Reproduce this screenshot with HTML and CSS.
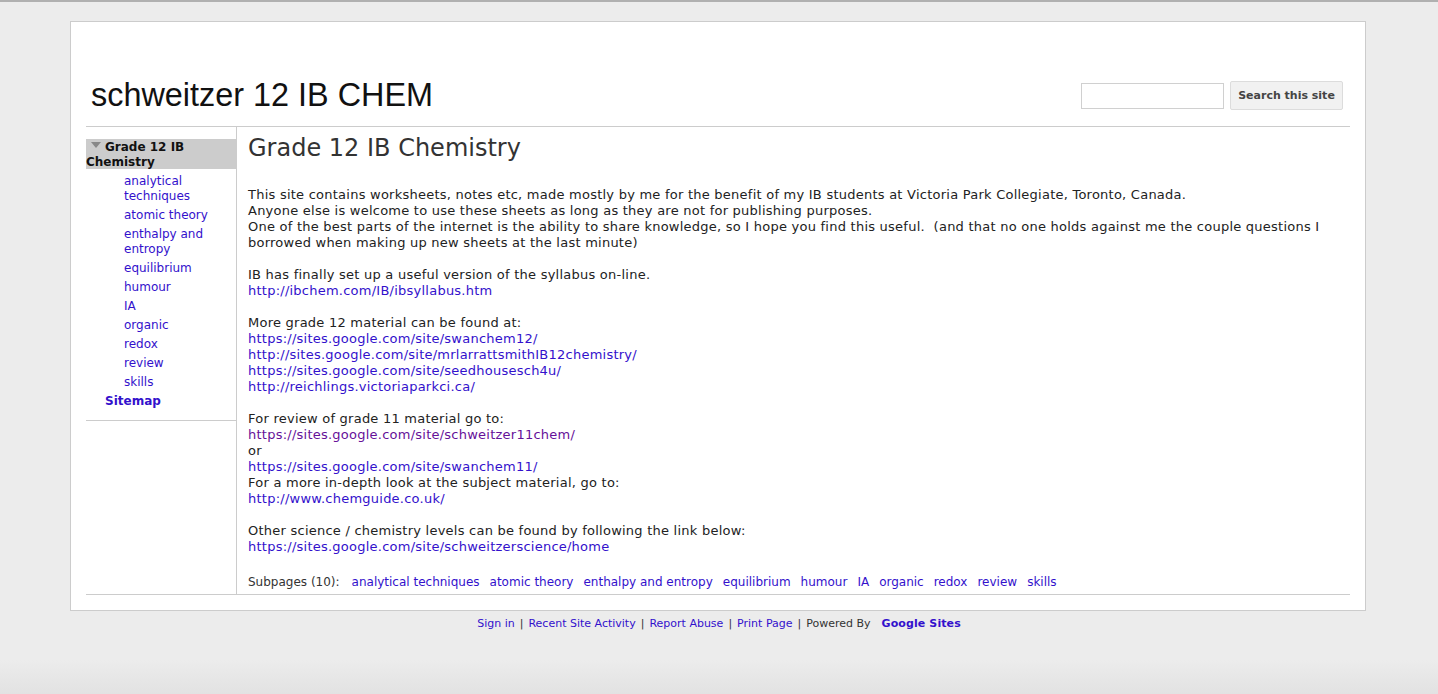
FILE: index.html
```html
<!DOCTYPE html>
<html>
<head>
<meta charset="utf-8">
<title>schweitzer 12 IB CHEM</title>
<link rel="stylesheet" href="styles.css">
</head>
<body>
<div class="page">
  <header class="header">
    <h1 class="site-title">schweitzer 12 IB CHEM</h1>
    <form class="search">
      <input class="search-input" type="text">
      <button class="search-btn" type="button">Search this site</button>
    </form>
  </header>
  <div class="main">
    <nav class="sidebar">
      <div class="nav-box">
        <div class="nav-current"><span class="tri"></span>Grade 12 IB Chemistry</div>
        <ul class="nav-list">
          <li><a href="#">analytical techniques</a></li>
          <li><a href="#">atomic theory</a></li>
          <li><a href="#">enthalpy and entropy</a></li>
          <li><a href="#">equilibrium</a></li>
          <li><a href="#">humour</a></li>
          <li><a href="#">IA</a></li>
          <li><a href="#">organic</a></li>
          <li><a href="#">redox</a></li>
          <li><a href="#">review</a></li>
          <li><a href="#">skills</a></li>
        </ul>
        <a class="sitemap" href="#">Sitemap</a>
      </div>
    </nav>
    <section class="content">
      <h2 class="page-title">Grade 12 IB Chemistry</h2>
      <div class="body-text">
        <p>This site contains worksheets, notes etc, made mostly by me for the benefit of my IB students at Victoria Park Collegiate, Toronto, Canada.<br>
        Anyone else is welcome to use these sheets as long as they are not for publishing purposes.<br>
        One of the best parts of the internet is the ability to share knowledge, so I hope you find this useful.&nbsp; (and that no one holds against me the couple questions I borrowed when making up new sheets at the last minute)</p>
        <p>IB has finally set up a useful version of the syllabus on-line.<br>
        <a href="#">http://ibchem.com/IB/ibsyllabus.htm</a></p>
        <p>More grade 12 material can be found at:<br>
        <a href="#">https://sites.google.com/site/swanchem12/</a><br>
        <a href="#">http://sites.google.com/site/mrlarrattsmithIB12chemistry/</a><br>
        <a href="#">https://sites.google.com/site/seedhousesch4u/</a><br>
        <a href="#">http://reichlings.victoriaparkci.ca/</a></p>
        <p>For review of grade 11 material go to:<br>
        <a class="visited" href="#">https://sites.google.com/site/schweitzer11chem/</a><br>
        or<br>
        <a href="#">https://sites.google.com/site/swanchem11/</a><br>
        For a more in-depth look at the subject material, go to:<br>
        <a href="#">http://www.chemguide.co.uk/</a></p>
        <p>Other science / chemistry levels can be found by following the link below:<br>
        <a href="#">https://sites.google.com/site/schweitzerscience/home</a></p>
      </div>
      <div class="subpages">
        <span class="sub-label">Subpages (10):</span>
        <a href="#">analytical techniques</a>
        <a href="#">atomic theory</a>
        <a href="#">enthalpy and entropy</a>
        <a href="#">equilibrium</a>
        <a href="#">humour</a>
        <a href="#">IA</a>
        <a href="#">organic</a>
        <a href="#">redox</a>
        <a href="#">review</a>
        <a href="#">skills</a>
      </div>
    </section>
  </div>
</div>
<footer class="footer">
  <a href="#">Sign in</a><span class="sep">|</span><a href="#">Recent Site Activity</a><span class="sep">|</span><a href="#">Report Abuse</a><span class="sep">|</span><a href="#">Print Page</a><span class="sep">|</span><span class="powered">Powered By</span><a class="gs" href="#">Google Sites</a>
</footer>
</body>
</html>
```

FILE: styles.css
```css
html, body {
  margin: 0;
  padding: 0;
}
body {
  min-height: 694px;
  box-sizing: border-box;
  background: linear-gradient(to bottom, #ececec 0, #ececec 660px, #e2e2e2 694px);
  border-top: 2px solid #b0b0b0;
  font-family: "DejaVu Sans", Verdana, sans-serif;
  color: #222;
  padding-top: 19px;
}
a {
  color: #3311cc;
  text-decoration: none;
}
a.visited {
  color: #661199;
}
.page {
  width: 1264px;
  margin: 0 0 0 70px;
  background: #fff;
  border: 1px solid #cccccc;
  padding: 0 15px 15px;
}
.header {
  height: 104px;
  display: flex;
  align-items: flex-end;
  justify-content: space-between;
  border-bottom: 1px solid #cccccc;
}
.site-title {
  margin: 0 0 13px 5px;
  font-family: "Liberation Sans", Arial, sans-serif;
  font-weight: normal;
  font-size: 32.4px;
  line-height: 36px;
  color: #111;
}
.search {
  display: flex;
  align-items: center;
  gap: 6px;
  margin: 0 7px 16px 0;
}
.search-input {
  width: 143px;
  height: 26px;
  box-sizing: border-box;
  border: 1px solid #d0d0d0;
  padding: 0 4px;
  margin: 0;
  background: #fff;
}
.search-btn {
  height: 29px;
  width: 113px;
  box-sizing: border-box;
  background: #f1f1f1;
  border: 1px solid #dcdcdc;
  border-radius: 2px;
  font-family: "DejaVu Sans", Verdana, sans-serif;
  font-weight: bold;
  font-size: 11px;
  color: #444;
  padding: 0;
}
.main {
  display: flex;
  border-bottom: 1px solid #cccccc;
}
.sidebar {
  width: 150px;
  flex: none;
  border-right: 1px solid #cccccc;
  padding-top: 12px;
}
.nav-box {
  border-bottom: 1px solid #cccccc;
  padding-bottom: 11px;
}
.nav-current {
  background: #cccccc;
  font-weight: bold;
  font-size: 12px;
  line-height: 15px;
  color: #111;
  padding: 1px 0 0;
  height: 30px;
  box-sizing: border-box;
}
.tri {
  display: inline-block;
  width: 0;
  height: 0;
  border-left: 5px solid transparent;
  border-right: 5px solid transparent;
  border-top: 6px solid #888;
  margin: 0 4px 1px 5px;
  vertical-align: middle;
  position: relative;
  top: -2px;
}
.nav-list {
  list-style: none;
  margin: 5px 0 0;
  padding: 0 0 0 38px;
}
.nav-list li {
  font-size: 12px;
  line-height: 15px;
  margin-bottom: 4px;
}
.sitemap {
  display: block;
  margin-left: 19px;
  font-weight: bold;
  font-size: 12px;
  line-height: 15px;
}
.content {
  flex: 1;
  padding: 6px 10px 4px 11px;
  min-width: 0;
}
.page-title {
  margin: 0 0 24px;
  font-size: 24px;
  font-weight: normal;
  line-height: 30px;
  color: #333;
}
.body-text {
  font-size: 13px;
  line-height: 16px;
  letter-spacing: 0.24px;
  color: #222;
}
.body-text p {
  margin: 0 0 16px;
}
.subpages {
  margin-top: 20px;
  font-size: 12px;
  line-height: 15px;
  color: #333;
  display: flex;
  flex-wrap: wrap;
  gap: 10px;
}
.sub-label {
  margin-right: 2px;
}
.footer {
  text-align: center;
  font-size: 11px;
  line-height: 14px;
  padding-top: 6px;
  color: #333;
}
.footer .sep {
  margin: 0 5px;
  color: #333;
}
.footer .powered {
  margin-right: 11px;
}
.footer .gs {
  font-weight: bold;
  letter-spacing: 0.1px;
}
```
